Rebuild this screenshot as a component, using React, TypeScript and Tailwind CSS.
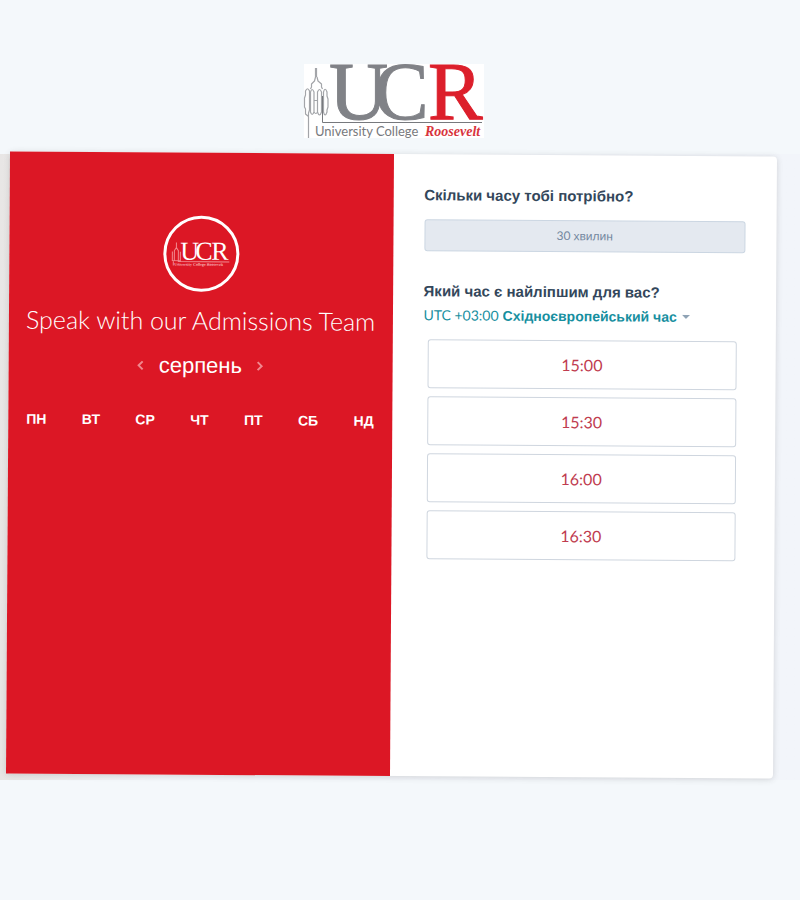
import React, { useState } from "react";

const weekdays = ["ПН", "ВТ", "СР", "ЧТ", "ПТ", "СБ", "НД"];
const slots = ["15:00", "15:30", "16:00", "16:30"];

function Tower() {
  return (
    <g fill="none" stroke="#a3a5a9" strokeWidth="1.2" strokeLinejoin="round">
      <path d="M12.500 4V13M11.500 4V13L10.500 17L7.500 20V23L6.500 25M13 13L14 17L17.500 20V23L18.500 25" />
      <path d="M4.500 74V52.500L1.500 50V45L0.500 43V34L1.500 31V27Q3.500 22.500 5.500 27V46L4.500 49V52" />
      <path d="M6.500 28V48Q8 53 10 48V28Q8 23 6.500 28M10 36.500H13.500M10 48Q12 51 13.500 48M13.500 48Q15.500 54 17.500 48V28Q15.500 23 13.500 28V48" />
      <path d="M19.500 28Q21 22.500 23 28V32L24 35V43L23 46V48Q21 54 19.500 48V28" />
    </g>
  );
}

function Logo() {
  return (
    <svg viewBox="0 0 180 74" width="180" height="74" className="overflow-visible" role="img" aria-label="University College Roosevelt">
      <rect width="180" height="74" fill="#ffffff" />
      <Tower />
      <path d="M18.500 32V58.500H178" fill="none" stroke="#77797d" strokeWidth="1" />
      <g className="font-['Liberation_Serif',serif]" fontSize="82" strokeWidth="1">
        <text x="25" y="55" fill="#808287" stroke="#808287">U</text>
        <text x="70" y="55" fill="#808287" stroke="#808287">C</text>
        <text x="124" y="55" fill="#dc1f2b" stroke="#dc1f2b">R</text>
      </g>
      <text x="11" y="72" fontSize="13" fill="#77797d" className="font-['Lato',sans-serif]">University College</text>
      <text x="121" y="72" fontSize="14" fill="#d8343d" className="font-['Liberation_Serif',serif] font-bold italic">Roosevelt</text>
    </svg>
  );
}

function Badge() {
  return (
    <div className="flex size-[76px] items-center justify-center rounded-full border-3 border-white">
      <svg viewBox="0 0 60 26" width="60" height="26" className="overflow-visible" role="img" aria-label="UCR">
        <g fill="none" stroke="#f18a90" strokeWidth="1">
          <path d="M5 2V7L3 10V20M5 7L7 10V20M1 11V20H9V11M2 20V25M7 20V21H58" />
        </g>
        <g className="font-['Liberation_Serif',serif]" fontSize="26" fill="#fff">
          <text x="9" y="19">U</text>
          <text x="24" y="19">C</text>
          <text x="40" y="19">R</text>
        </g>
        <text x="3" y="25" fontSize="4" fill="#f7b6ba" className="font-['Liberation_Serif',serif] font-bold">University College Roosevelt</text>
      </svg>
    </div>
  );
}

function Arrow({ d, label }: { d: string; label: string }) {
  return (
    <button type="button" aria-label={label} className="flex size-5 items-center justify-center">
      <svg viewBox="0 0 8 12" width="8" height="12" fill="none" stroke="#f0878e" strokeWidth="2">
        <path d={d} />
      </svg>
    </button>
  );
}

export default function App() {
  const [zone, setZone] = useState("eet");
  return (
    <div className="min-h-screen overflow-hidden bg-[#f4f8fb] pt-16 font-['Liberation_Sans',Arial,sans-serif]">
      <header className="flex justify-center pr-3">
        <Logo />
      </header>
      <main className="mt-5 bg-linear-to-r from-[#e8e6e5] to-[#f2f5fa] to-20% pr-[25px] pb-1 pl-2">
        <div className="-mt-1 grid min-h-[622px] rotate-[0.37deg] grid-cols-2 rounded-sm bg-white shadow-[0_1px_6px_rgba(70,70,70,0.2)]">
          <section className="flex flex-col items-center bg-[#dc1725] px-4 pt-[63px] text-white">
            <Badge />
            <h1 className="mt-3 text-[25px] leading-8 font-light whitespace-nowrap font-['Lato',sans-serif]">
              Speak with our Admissions Team
            </h1>
            <div className="mt-[14px] flex items-center gap-2">
              <Arrow label="Попередній місяць" d="M6 2L2 6L6 10" />
              <h2 className="text-[22px] leading-8">серпень</h2>
              <Arrow label="Наступний місяць" d="M2 2L6 6L2 10" />
            </div>
            <ol className="mt-[26px] flex w-full justify-between px-0.5 text-sm leading-6 font-bold">
              {weekdays.map((day) => (
                <li key={day}>{day}</li>
              ))}
            </ol>
          </section>
          <section className="px-[31px] pt-[29px]">
            <h2 className="text-[15px] leading-6 font-bold text-[#33475b]">Скільки часу тобі потрібно?</h2>
            <button
              type="button"
              className="mt-3 flex h-8 w-full items-center justify-center gap-[3px] rounded-[3px] border border-[#cbd6e2] bg-[#e4e9f0] text-xs text-[#7488a0]"
            >
              <span className="font-['Lato',sans-serif]">30</span>
              <span>хвилин</span>
            </button>
            <h2 className="mt-7 text-[15px] leading-6 font-bold text-[#33475b]">Який час є найліпшим для вас?</h2>
            <div className="flex h-6 items-center text-sm text-[#178f9f]">
              <label htmlFor="zone" className="mr-1 font-['Lato',sans-serif]">UTC +03:00</label>
              <select
                id="zone"
                value={zone}
                onChange={(e) => setZone(e.target.value)}
                className="appearance-none bg-transparent text-sm font-bold"
              >
                <option value="eet">Східноєвропейський час</option>
              </select>
              <svg viewBox="0 0 8 4" width="8" height="4" className="ml-1" fill="#8fa3b5" aria-hidden="true">
                <path d="M0 0H8L4 4Z" />
              </svg>
            </div>
            <div className="mt-3 mr-2 ml-1 flex flex-col gap-2">
              {slots.map((slot) => (
                <button
                  key={slot}
                  type="button"
                  className="h-[49px] rounded-[3px] border border-[#cfd6df] text-base text-[#c03c50] font-['Lato',sans-serif]"
                >
                  {slot}
                </button>
              ))}
            </div>
          </section>
        </div>
      </main>
    </div>
  );
}
